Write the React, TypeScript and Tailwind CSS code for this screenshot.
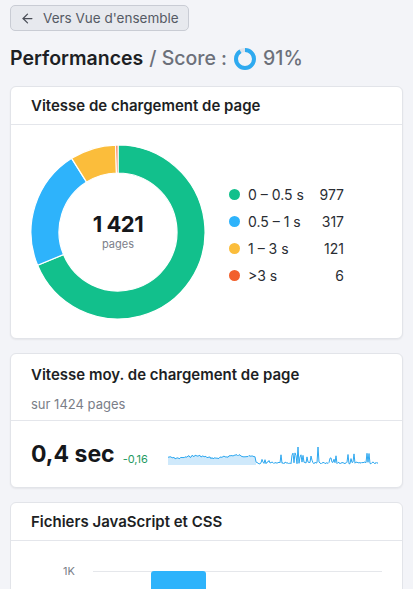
import { ArrowLeft } from "lucide-react";

const SEGMENTS = [
  { label: "0 – 0.5 s", value: 977, color: "#12c08c" },
  { label: "0.5 – 1 s", value: 317, color: "#2eb3fb" },
  { label: "1 – 3 s", value: 121, color: "#fbbd3b" },
  { label: ">3 s", value: 6, color: "#f2602c" },
];

function Donut() {
  const total = SEGMENTS.reduce((s, x) => s + x.value, 0);
  const cx = 87;
  const cy = 87;
  const R = 87;
  const r = 59;
  let acc = 0;
  const pt = (a: number, rad: number) => [
    cx + rad * Math.sin(a),
    cy - rad * Math.cos(a),
  ];
  return (
    <svg width="174" height="174" viewBox="0 0 174 174">
      {SEGMENTS.map((s) => {
        const a0 = (acc / total) * Math.PI * 2;
        acc += s.value;
        const a1 = (acc / total) * Math.PI * 2;
        const large = a1 - a0 > Math.PI ? 1 : 0;
        const [x0, y0] = pt(a0, R);
        const [x1, y1] = pt(a1, R);
        const [x2, y2] = pt(a1, r);
        const [x3, y3] = pt(a0, r);
        const d = `M${x0} ${y0} A${R} ${R} 0 ${large} 1 ${x1} ${y1} L${x2} ${y2} A${r} ${r} 0 ${large} 0 ${x3} ${y3} Z`;
        return (
          <path key={s.label} d={d} fill={s.color} stroke="#fff" strokeWidth="1.2" />
        );
      })}
    </svg>
  );
}

function Sparkline() {
  let seed = 7;
  const rnd = () => {
    seed = (seed * 9301 + 49297) % 233280;
    return seed / 233280;
  };
  const pts: string[] = [];
  const n = 210;
  for (let i = 0; i <= n; i++) {
    let y: number;
    if (i < 88) {
      y = 13 + Math.sin(i / 6) * 1.2 + rnd() * 2 - (i > 60 ? (i - 60) / 14 : 0);
    } else {
      y = 19 + rnd() * 2;
      if (rnd() > 0.78) y = 19 - rnd() * 10;
      if (i === 130 || i === 150) y = 4;
    }
    pts.push(`${i},${y.toFixed(1)}`);
  }
  const area = `0,22 ${pts.slice(0, 89).join(" ")} 88,22`;
  return (
    <svg width="210" height="24" viewBox="0 0 210 24" className="block">
      <polygon points={area} fill="#cfe9fb" />
      <polyline points={pts.join(" ")} fill="none" stroke="#2ea8f0" strokeWidth="1" />
    </svg>
  );
}

function ScoreRing() {
  const r = 9;
  const c = 2 * Math.PI * r;
  return (
    <svg width="24" height="24" viewBox="0 0 24 24" className="mx-[6px]">
      <circle cx="12" cy="12" r={r} fill="none" stroke="#dfe3ea" strokeWidth="4" />
      <circle
        cx="12"
        cy="12"
        r={r}
        fill="none"
        stroke="#2eaaf0"
        strokeWidth="4"
        strokeDasharray={`${c * 0.91} ${c}`}
        transform="rotate(-90 12 12)"
      />
    </svg>
  );
}

export default function App() {
  return (
    <div
      className="min-h-[589px] bg-[#f3f4f8] px-[10px] pt-[5px] text-[#1d1f24]"
      style={{ fontFamily: "Inter, 'Noto Sans', sans-serif" }}
    >
      <button className="flex h-[26px] items-center gap-[8px] rounded-[5px] border border-[#c9ccd4] bg-[#e7e9ee] pl-[9px] pr-[9px] text-[13.5px] text-[#555a64]">
        <ArrowLeft size={15} strokeWidth={2} className="text-[#4a4e57]" />
        Vers Vue d'ensemble
      </button>

      <div className="mt-[15px] flex h-[26px] items-center text-[19.5px] font-semibold">
        <span className="text-[#1d1f24]">Performances</span>
        <span className="ml-[6px] font-medium text-[#6c707a]">/ Score :</span>
        <ScoreRing />
        <span className="font-medium text-[#6c707a]">91%</span>
      </div>

      <div className="mt-[14px] rounded-[6px] border border-[#e2e4e9] bg-white shadow-[0_1px_2px_rgba(0,0,0,0.06)]">
        <div className="flex h-[38px] items-center border-b border-[#e4e6eb] px-[20px] pt-[2px] text-[15px] font-semibold">
          Vitesse de chargement de page
        </div>
        <div className="flex items-center px-[20px] pb-[19px] pt-[20px]">
          <div className="relative h-[174px] w-[174px]">
            <Donut />
            <div className="absolute inset-0 flex flex-col items-center justify-center pb-[2px]">
              <div className="text-[22px] font-bold leading-[26px] tracking-[-0.5px] text-[#15171b]">1 421</div>
              <div className="text-[11px] leading-[14px] text-[#7c808a]">pages</div>
            </div>
          </div>
          <div className="ml-[24px] flex flex-col gap-[9px] pt-[5px]">
            {SEGMENTS.map((s) => (
              <div key={s.label} className="flex h-[18px] items-center text-[14px] text-[#2a2d33]">
                <span className="h-[11px] w-[11px] rounded-full" style={{ backgroundColor: s.color }} />
                <span className="ml-[8px] w-[62px]">{s.label}</span>
                <span className="w-[34px] text-right">{s.value}</span>
              </div>
            ))}
          </div>
        </div>
      </div>

      <div className="mt-[14px] rounded-[6px] border border-[#e2e4e9] bg-white shadow-[0_1px_2px_rgba(0,0,0,0.06)]">
        <div className="border-b border-[#e4e6eb] px-[20px] pb-[7px] pt-[11px]">
          <div className="text-[15px] font-semibold leading-[20px]">Vitesse moy. de chargement de page</div>
          <div className="mt-[10px] text-[13px] leading-[18px] text-[#7a7e88]">sur 1424 pages</div>
        </div>
        <div className="flex h-[66px] items-center px-[20px]">
          <span className="text-[23px] font-bold leading-none text-[#15171b]">0,4 sec</span>
          <span className="ml-[8px] mt-[10px] text-[11px] text-[#1f9a63]">-0,16</span>
          <div className="ml-[20px] mt-[2px]">
            <Sparkline />
          </div>
        </div>
      </div>

      <div className="mt-[14px] rounded-t-[6px] border border-[#e2e4e9] bg-white">
        <div className="flex h-[38px] items-center border-b border-[#e4e6eb] px-[20px] pt-[2px] text-[15px] font-semibold">
          Fichiers JavaScript et CSS
        </div>
        <div className="relative h-[60px]">
          <div className="absolute left-[52px] top-[22px] text-[11px] text-[#7a7e88]">1K</div>
          <div className="absolute left-[82px] right-[20px] top-[30px] h-px bg-[#e5e7eb]" />
          <div className="absolute left-[140px] top-[30px] h-[40px] w-[55px] rounded-t-[3px] bg-[#2eb3fb]" />
        </div>
      </div>
    </div>
  );
}
